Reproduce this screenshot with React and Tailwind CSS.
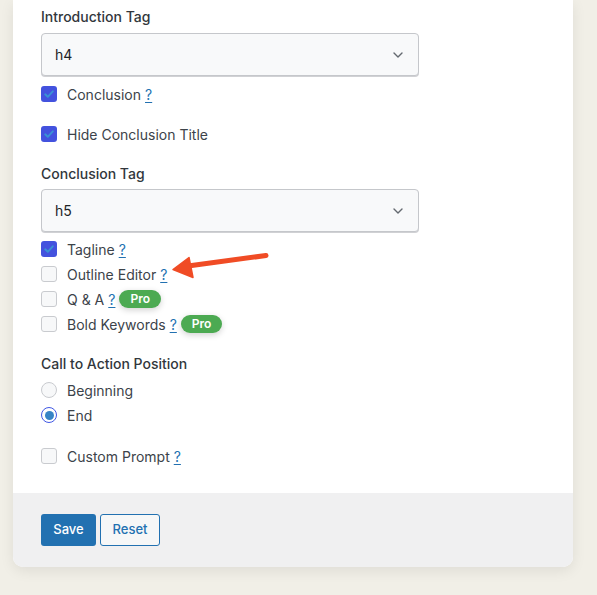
import React from "react";

const font = { fontFamily: "Inter, 'Noto Sans', 'Liberation Sans', sans-serif" };

function Check({ checked }) {
  if (checked) {
    return (
      <span className="w-4 h-4 rounded-[3px] bg-[#4352de] flex items-center justify-center shrink-0">
        <svg width="12" height="12" viewBox="0 0 12 12">
          <path d="M2.2 6.3 L4.8 8.8 L9.8 3.3" fill="none" stroke="#3a92d4" strokeWidth="1.9" strokeLinecap="round" strokeLinejoin="round" />
        </svg>
      </span>
    );
  }
  return <span className="w-4 h-4 rounded-[3px] border border-[#c9cbcf] bg-[#f7f8f9] shrink-0" />;
}

function Radio({ checked }) {
  if (checked) {
    return (
      <span className="w-4 h-4 rounded-full border border-[#3f57e4] bg-white flex items-center justify-center shrink-0">
        <span className="w-[9px] h-[9px] rounded-full bg-[#3784c6]" />
      </span>
    );
  }
  return <span className="w-4 h-4 rounded-full border border-[#c9cbcf] bg-[#f7f8f9] shrink-0" />;
}

function Help() {
  return <span className="text-[#2271b1] underline underline-offset-2 ml-[4px]">?</span>;
}

function Pro() {
  return (
    <span className="ml-[4px] h-[18px] px-[11px] rounded-full bg-[#4caa52] text-white text-[12px] font-semibold leading-[18px] shadow-[0_2px_6px_rgba(0,0,0,0.18)]">
      Pro
    </span>
  );
}

function Row({ mt, children, box }) {
  return (
    <div className={`flex items-center h-5 text-[14px] text-[#3c434a] ${mt}`}>
      {box}
      <span className="ml-[10px] flex items-center">{children}</span>
    </div>
  );
}

function Select({ value, mt }) {
  return (
    <div className={`w-[378px] h-[43px] rounded-[4px] border border-[#c5c7cb] bg-[#f8f9fa] flex items-center justify-between pl-[13px] pr-[14px] text-[14px] text-[#1d2327] shadow-[0_1px_0_#d0d1d4] ${mt}`}>
      <span>{value}</span>
      <svg width="12" height="8" viewBox="0 0 12 8">
        <path d="M2 2 L6 6 L10 2" fill="none" stroke="#646970" strokeWidth="1.4" strokeLinecap="round" strokeLinejoin="round" />
      </svg>
    </div>
  );
}

function Label({ children, mt }) {
  return <div className={`h-5 leading-5 text-[14px] font-medium text-[#32373c] ${mt}`}>{children}</div>;
}

export default function App() {
  return (
    <div className="relative w-[597px] h-[595px] bg-[#f1efe7] overflow-hidden" style={font}>
      <div className="ml-[13px] w-[560px] bg-white rounded-b-[10px] shadow-[0_4px_14px_rgba(0,0,0,0.08)] overflow-hidden">
        <div className="pl-[28px] pt-[7px] pb-[27px] flex flex-col">
          <Label>Introduction Tag</Label>
          <Select value="h4" mt="mt-[6px]" />
          <Row mt="mt-[8px]" box={<Check checked />}>Conclusion<Help /></Row>
          <Row mt="mt-[20px]" box={<Check checked />}>Hide Conclusion Title</Row>
          <Label mt="mt-[20px]">Conclusion Tag</Label>
          <Select value="h5" mt="mt-[5px]" />
          <Row mt="mt-[7px]" box={<Check checked />}>Tagline<Help /></Row>
          <Row mt="mt-[5px]" box={<Check />}>Outline Editor<Help /></Row>
          <Row mt="mt-[5px]" box={<Check />}>Q &amp; A<Help /><Pro /></Row>
          <Row mt="mt-[5px]" box={<Check />}>Bold Keywords<Help /><Pro /></Row>
          <Label mt="mt-[20px]">Call to Action Position</Label>
          <Row mt="mt-[6px]" box={<Radio />}>Beginning</Row>
          <Row mt="mt-[5px]" box={<Radio checked />}>End</Row>
          <Row mt="mt-[21px]" box={<Check />}>Custom Prompt<Help /></Row>
        </div>
        <div className="bg-[#f0f0f1] h-[74px] pl-[28px] flex items-center gap-[4px]">
          <button className="h-8 w-[55px] rounded-[3px] bg-[#2271b1] text-white text-[13px] font-medium">Save</button>
          <button className="h-8 w-[60px] rounded-[3px] border border-[#2271b1] bg-[#f6f7f7] text-[#2271b1] text-[13px] font-medium">Reset</button>
        </div>
      </div>
      <svg className="absolute left-0 top-0 pointer-events-none" width="597" height="595" viewBox="0 0 597 595">
        <line x1="266" y1="255.5" x2="188" y2="266" stroke="#f04c25" strokeWidth="5" strokeLinecap="round" />
        <polygon points="173,269.5 189,257.5 193,277.5" fill="#f04c25" stroke="#f04c25" strokeWidth="1.5" strokeLinejoin="round" />
      </svg>
    </div>
  );
}
